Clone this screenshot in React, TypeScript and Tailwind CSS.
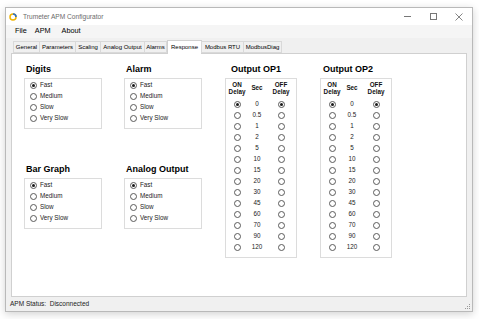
import React from "react";

const F = { fontFamily: '"Liberation Sans", Arial, sans-serif' };

function Radio({ checked = false }: { checked?: boolean }) {
  return (
    <span className="w-[7px] h-[7px] shrink-0 rounded-full border border-[#5a5a5a] bg-white flex items-center justify-center">
      {checked && <span className="w-[3px] h-[3px] rounded-full bg-[#1a1a1a]" />}
    </span>
  );
}

function Group({ title }: { title: string }) {
  const opts = ["Fast", "Medium", "Slow", "Very Slow"];
  return (
    <div className="flex flex-col w-[78px]">
      <div className="h-[10px] leading-[10px] text-[9px] font-bold text-black pl-[2px] mb-[4px] whitespace-nowrap">
        {title}
      </div>
      <div className="h-[51px] border border-[#dcdcdc] bg-white pt-[1px] pl-[5px]">
        {opts.map((o, i) => (
          <div key={o} className="h-[11px] flex items-center gap-[3px]">
            <Radio checked={i === 0} />
            <span className="text-[6.3px] text-[#222] leading-none whitespace-nowrap">{o}</span>
          </div>
        ))}
      </div>
    </div>
  );
}

function Output({ title, pl, extra = "" }: { title: string; pl: string; extra?: string }) {
  const secs = ["0", "0.5", "1", "2", "5", "10", "15", "20", "30", "45", "60", "70", "90", "120"];
  return (
    <div className={`flex flex-col w-[72px] ${extra}`}>
      <div className={`h-[10px] leading-[10px] text-[9px] font-bold text-black mb-[4px] whitespace-nowrap ${pl}`}>
        {title}
      </div>
      <div className="h-[180px] border border-[#dcdcdc] bg-white">
        <div className="grid grid-cols-[22px_18px_30px] h-[20px] pt-[3px] text-[6.3px] font-bold text-[#111]">
          <div className="flex flex-col items-center leading-[6.5px]">
            <span>ON</span>
            <span>Delay</span>
          </div>
          <div className="flex items-center justify-center leading-none pb-[4px]">Sec</div>
          <div className="flex flex-col items-center leading-[6.5px]">
            <span>OFF</span>
            <span>Delay</span>
          </div>
        </div>
        {secs.map((s, i) => (
          <div key={s} className="grid grid-cols-[22px_18px_30px] h-[11px] items-center">
            <div className="flex justify-center">
              <Radio checked={i === 0} />
            </div>
            <div className="text-center text-[6.3px] leading-none text-[#222]">{s}</div>
            <div className="flex justify-center">
              <Radio checked={i === 0} />
            </div>
          </div>
        ))}
      </div>
    </div>
  );
}

export default function App() {
  const tabs: [string, number][] = [
    ["General", 27],
    ["Parameters", 37],
    ["Scaling", 26],
    ["Analog Output", 45],
    ["Alarms", 23],
    ["Response", 35],
    ["Modbus RTU", 43],
    ["ModbusDiag", 39],
  ];
  return (
    <div style={F} className="w-[479px] h-[319px] bg-white pt-[7px] pl-[5px] overflow-hidden">
      <div className="w-[468px] h-[305px] border border-[#b9b9b9] shadow-[0_2px_8px_rgba(0,0,0,0.18)] bg-[#f0f0f0] flex flex-col">
        {/* Title bar */}
        <div className="h-[17px] bg-white flex items-center pl-[3px] shrink-0">
          <svg width="8" height="8" viewBox="0 0 16 16" className="shrink-0">
            <circle cx="8" cy="8" r="6" fill="none" stroke="#f0b400" strokeWidth="3" />
            <path d="M8 2 A6 6 0 0 1 14 8" fill="none" stroke="#2a6fc9" strokeWidth="3" />
          </svg>
          <span className="ml-[6px] text-[6.6px] text-[#6b6b6b] whitespace-nowrap">Trumeter APM Configurator</span>
          <div className="ml-auto flex items-center h-full">
            <div className="w-[26px] flex justify-center">
              <div className="w-[7px] h-px bg-[#777]" />
            </div>
            <div className="w-[26px] flex justify-center">
              <div className="w-[7px] h-[7px] border border-[#777]" />
            </div>
            <div className="w-[26px] flex justify-center">
              <svg width="8" height="8" viewBox="0 0 8 8">
                <path d="M0.5 0.5 L7.5 7.5 M7.5 0.5 L0.5 7.5" stroke="#777" strokeWidth="0.9" />
              </svg>
            </div>
          </div>
        </div>
        {/* Menu bar */}
        <div className="h-[13px] bg-[#f5f5f5] flex items-center pl-[9px] gap-[8px] text-[7.3px] text-black shrink-0">
          <span>File</span>
          <span>APM</span>
          <span className="ml-[3px]">About</span>
        </div>
        {/* Body */}
        <div className="flex-1 flex flex-col pl-[5px] pr-[5px] pt-[1px] min-h-0">
          <div className="h-[14px] flex items-end pl-[2px] shrink-0 relative z-10">
            {tabs.map(([t, w]) => {
              const sel = t === "Response";
              return (
                <div
                  key={t}
                  style={{ width: w }}
                  className={
                    sel
                      ? "h-[14px] bg-white border border-b-0 border-[#d0d0d0] flex items-center justify-center text-[6px] text-black whitespace-nowrap -mb-px pb-[1px]"
                      : "h-[12px] bg-[#f0f0f0] border border-[#d9d9d9] -ml-px first:ml-0 flex items-center justify-center text-[6px] text-black whitespace-nowrap"
                  }
                >
                  {t}
                </div>
              );
            })}
          </div>
          <div className="h-[244px] bg-white border border-[#d0d0d0] pt-[10px] pl-[12px] flex gap-[22px] shrink-0">
            <div className="flex flex-col gap-[35px]">
              <Group title="Digits" />
              <Group title="Bar Graph" />
            </div>
            <div className="flex flex-col gap-[35px]">
              <Group title="Alarm" />
              <Group title="Analog Output" />
            </div>
            <Output title="Output OP1" pl="pl-[6px]" extra="ml-[1px]" />
            <Output title="Output OP2" pl="pl-[3px]" extra="ml-[1px]" />
          </div>
        </div>
        {/* Status bar */}
        <div className="h-[15px] flex items-center pl-[4px] text-[6.5px] text-[#222] shrink-0 relative">
          <span className="whitespace-pre">APM Status:  Disconnected</span>
          <div className="absolute right-[2px] bottom-[2px] grid grid-cols-3 gap-[1px]">
            <span className="w-px h-px" />
            <span className="w-px h-px" />
            <span className="w-px h-px bg-[#999]" />
            <span className="w-px h-px" />
            <span className="w-px h-px bg-[#999]" />
            <span className="w-px h-px bg-[#999]" />
            <span className="w-px h-px bg-[#999]" />
            <span className="w-px h-px bg-[#999]" />
            <span className="w-px h-px bg-[#999]" />
          </div>
        </div>
      </div>
    </div>
  );
}
